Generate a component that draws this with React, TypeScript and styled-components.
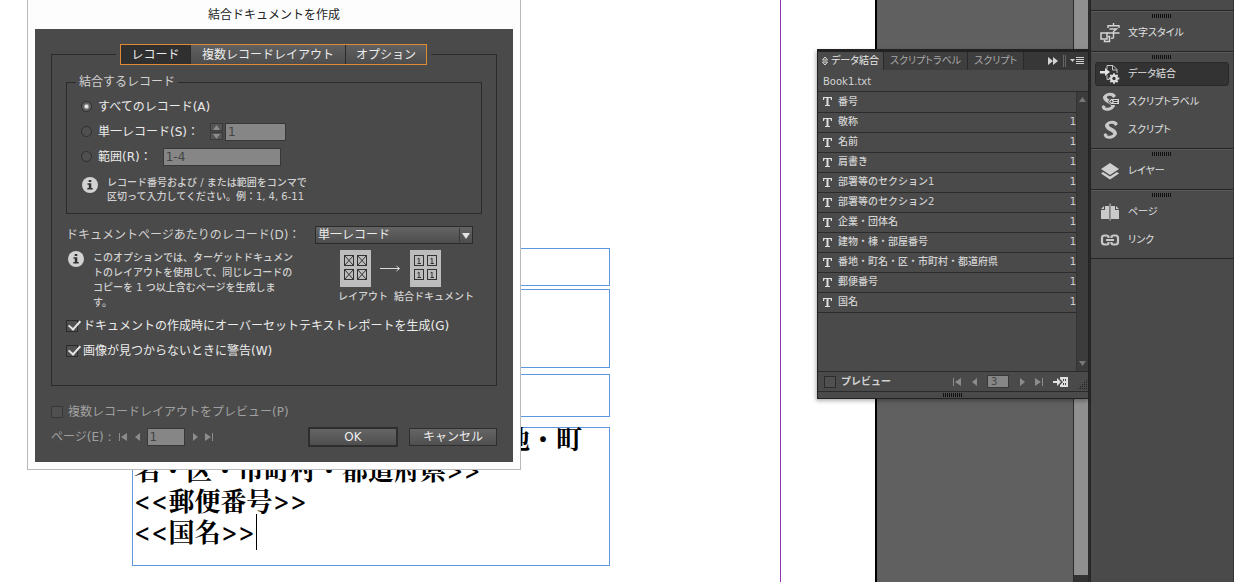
import React from "react";
import styled, { createGlobalStyle, css } from "styled-components";

const c = {
  face: "#4a4a4a",
  line: "#2b2b2b",
  field: "#868686",
  text: "#ececec",
  soft: "#d2d2d2",
  off: "#a0a0a0",
  frame: "#5f96e0",
};

const Global = createGlobalStyle`
  * { box-sizing: border-box; }
  body {
    margin: 0;
    background: #fff;
    color: ${c.text};
    font-family: "DejaVu Sans", "Noto Sans CJK JP", sans-serif;
    font-size: 12px;
    line-height: 20px;
  }
  button, input, select { font: inherit; font-feature-settings: inherit; color: inherit; margin: 0; }
  svg { display: block; flex: none; }
`;

const Workspace = styled.div`
  display: flex;
  min-height: 100vh;
`;

/* ---------- document ---------- */

const Canvas = styled.main`
  position: relative;
  display: flex;
  flex: 1;
  min-width: 0;
`;

const Sheet = styled.div`
  position: relative;
  flex: 1;
  background: #fff;
  border-right: 2px solid #000;
`;

const Guide = styled.div`
  position: absolute;
  left: 780px;
  top: 0;
  bottom: 0;
  width: 1px;
  background: #8e35b5;
`;

const Pasteboard = styled.div`
  width: 196px;
  background: #606060;
`;

const CanvasScroll = styled.div`
  display: flex;
  width: 17px;
  padding-bottom: 7px;
  background: #333;
  border-left: 1px solid #2b2b2b;
  border-right: 2px solid #2b2b2b;
`;

const CanvasThumb = styled.div`
  flex: 1;
  background: #8f8f8f;
`;

const Frame = styled.div<{ $top: number; $height: number }>`
  position: absolute;
  left: 132px;
  top: ${(p) => p.$top}px;
  width: 478px;
  height: ${(p) => p.$height}px;
  border: 1px solid ${c.frame};
`;

const Story = styled.p`
  margin: -6px 0 0;
  padding: 0 1px;
  color: #000;
  font-family: "Noto Serif CJK JP", "Noto Sans CJK JP", serif;
  font-size: 26px;
  font-weight: 700;
  line-height: 31px;
  white-space: nowrap;
`;

const StoryLine = styled.span<{ $end?: boolean }>`
  display: block;
  width: ${(p) => (p.$end ? "448px" : "auto")};
  height: 31px;
  text-align: ${(p) => (p.$end ? "right" : "left")};
`;

const Mark = styled.span`
  font-family: Inter, sans-serif;
  font-weight: 400;
`;

const Caret = styled.span`
  display: inline-block;
  width: 1px;
  height: 36px;
  margin: -10px 0 -8px 1px;
  vertical-align: baseline;
  background: #000;
`;

/* ---------- dialog ---------- */

const Dialog = styled.form`
  position: absolute;
  left: 27px;
  top: 0;
  width: 494px;
  padding: 0 7px 7px;
  background: #fdfdfd;
  border: 1px solid #b9b9b9;
  border-top: 0;
`;

const DialogTitle = styled.h1`
  margin: 0;
  height: 29px;
  color: #222;
  font-size: 12px;
  font-weight: 400;
  line-height: 30px;
  text-align: center;
`;

const DialogBody = styled.div`
  padding: 15px 16px 13px;
  background: ${c.face};
`;

const Group = styled.fieldset<{ $outer?: boolean }>`
  min-width: 0;
  margin: 0;
  border: 1px solid ${c.line};
  padding: 2px 9px 9px;
  ${(p) =>
    p.$outer &&
    css`
      padding: 7px 14px 22px;
    `}
`;

const Caption = styled.legend`
  margin: 0;
  padding: 0 3px;
  color: ${c.soft};
`;

const TabLegend = styled.legend`
  margin-left: 50px;
  padding: 0 4px;
`;

const TabStrip = styled.div`
  display: flex;
  height: 21px;
  border: 1px solid #e08a32;
`;

const Tab = styled.button<{ $on?: boolean; $w: number }>`
  width: ${(p) => p.$w}px;
  padding: 0;
  border: 0;
  border-left: ${(p) => (p.$on ? "0" : "1px solid #2b2b2b")};
  background: ${(p) => (p.$on ? "#303030" : "linear-gradient(#606060, #4d4d4d)")};
  line-height: 18px;
  white-space: nowrap;
`;

const Row = styled.div<{ $dim?: boolean }>`
  display: flex;
  align-items: center;
  height: 25px;
  white-space: nowrap;
  color: ${(p) => (p.$dim ? c.off : c.text)};
`;

const OptionLabel = styled.label`
  margin-right: 11px;
`;

const Radio = styled.input.attrs({ type: "radio" })`
  appearance: none;
  flex: none;
  width: 11px;
  height: 11px;
  margin: 0 6px 0 5px;
  border: 1px solid #2f2f2f;
  border-radius: 50%;
  background: #505050;
  &:checked {
    background: radial-gradient(circle, #f0f0f0 1px, #606060 3px);
  }
`;

const Check = styled.input.attrs({ type: "checkbox" })`
  appearance: none;
  position: relative;
  flex: none;
  width: 12px;
  height: 12px;
  margin: 0 5px 0 0;
  border: 1px solid #2b2b2b;
  background: #505050;
  &:disabled { border-color: #383838; }
  &:checked::before {
    content: "";
    position: absolute;
    left: 4px;
    top: -3px;
    width: 5px;
    height: 10px;
    border: solid #e6e6e6;
    border-width: 0 2px 2px 0;
    transform: rotate(42deg);
  }
`;

const Field = styled.input.attrs({ type: "text" })<{ $w: number }>`
  width: ${(p) => p.$w}px;
  height: 18px;
  padding: 0 2px;
  border: 1px solid #383838;
  border-radius: 0;
  background: ${c.field};
  color: #444;
  line-height: 16px;
`;

const Spinner = styled.span`
  display: grid;
  gap: 1px;
  margin-right: 2px;
`;

const SpinButton = styled.button`
  display: grid;
  place-items: center;
  width: 13px;
  height: 8px;
  padding: 0;
  border: 1px solid #3a3a3a;
  background: #555;
  color: #8d8d8d;
`;

const Hint = styled.div<{ $inner?: boolean }>`
  display: flex;
  align-items: flex-start;
  gap: 9px;
  padding: ${(p) => (p.$inner ? "7px 0 0 6px" : "3px 0 0 2px")};
  > svg { margin-top: 1px; }
`;

const HintText = styled.p<{ $tight?: boolean }>`
  margin: 0;
  color: ${c.soft};
  font-size: 10px;
  font-weight: 500;
  line-height: ${(p) => (p.$tight ? 14 : 15)}px;
  white-space: nowrap;
`;

const Spread = styled.div`
  display: flex;
  align-items: center;
  justify-content: space-between;
  height: 25px;
  margin-top: 8px;
  padding-right: 9px;
  color: ${c.soft};
  white-space: nowrap;
`;

const Picker = styled.span`
  display: grid;
  align-items: center;
  width: 158px;
  > * { grid-area: 1 / 1; }
  svg { justify-self: end; pointer-events: none; }
`;

const Select = styled.select`
  appearance: none;
  width: 100%;
  height: 18px;
  padding: 0 2px;
  border: 1px solid #2b2b2b;
  border-radius: 0;
  background: linear-gradient(#646464, #4d4d4d);
  color: ${c.text};
  line-height: 16px;
`;

const Preview = styled.div`
  margin-left: auto;
  padding-right: 8px;
  color: ${c.soft};
  font-size: 10px;
  font-weight: 500;
  line-height: 15px;
  white-space: nowrap;
`;

const Thumbs = styled.div`
  display: flex;
  gap: 9px;
  padding: 0 2px 2px;
`;

const ThumbNames = styled.div`
  display: flex;
  gap: 6px;
`;

const Checks = styled.div`
  padding-top: 3px;
`;

const Footer = styled.div`
  padding-top: 13px;
`;

const Steps = styled.span`
  display: flex;
  align-items: center;
  gap: 7px;
  flex: 1;
`;

const StepButton = styled.button`
  display: grid;
  place-items: center;
  padding: 0;
  border: 0;
  background: none;
  color: #8c8c8c;
`;

const PushButton = styled.button<{ $primary?: boolean }>`
  width: ${(p) => (p.$primary ? 90 : 88)}px;
  height: ${(p) => (p.$primary ? 20 : 18)}px;
  margin-left: ${(p) => (p.$primary ? 0 : 11)}px;
  padding: 0;
  border: ${(p) => (p.$primary ? 2 : 1)}px solid #2e2e2e;
  background: linear-gradient(#656565, #4f4f4f);
  color: ${c.text};
  line-height: 16px;
`;

/* ---------- data panel ---------- */

const Panel = styled.section`
  position: absolute;
  right: 1px;
  top: 49px;
  width: 272px;
  border: 1px solid #222;
  border-top-width: 3px;
  background: ${c.face};
  color: ${c.soft};
  font-size: 10px;
  box-shadow: -1px 2px 4px rgba(0, 0, 0, 0.3);
`;

const PanelTabs = styled.div`
  display: flex;
  height: 18px;
  background: #373737;
  font-feature-settings: "palt";
`;

const PanelTab = styled.button<{ $on?: boolean }>`
  display: flex;
  align-items: center;
  gap: 3px;
  height: 18px;
  padding: 0 ${(p) => (p.$on ? 4 : 6)}px;
  border: 0;
  border-right: 1px solid #292929;
  background: ${(p) => (p.$on ? c.face : "#3e3e3e")};
  color: ${(p) => (p.$on ? "#e8e8e8" : "#a8a8a8")};
  line-height: 16px;
  white-space: nowrap;
`;

const PanelTools = styled.div`
  display: flex;
  align-items: center;
  gap: 5px;
  margin-left: auto;
  padding-right: 3px;
`;

const Source = styled.div`
  height: 22px;
  padding: 0 5px;
  border-bottom: 1px solid ${c.line};
  line-height: 24px;
`;

const ListArea = styled.div`
  display: flex;
  height: 280px;
  border-bottom: 1px solid ${c.line};
`;

const ListBox = styled.div`
  flex: 1;
`;

const FieldTable = styled.table`
  width: 100%;
  border-collapse: collapse;
  font-weight: 500;
  td {
    height: 20px;
    padding: 0 0 0 3px;
    border-bottom: 1px solid ${c.line};
    line-height: 18px;
  }
  td:first-child { width: 17px; padding-left: 5px; }
  td:last-child { text-align: right; }
`;

const ListScroll = styled.div`
  display: flex;
  flex-direction: column;
  justify-content: space-between;
  align-items: center;
  width: 12px;
  padding: 5px 0;
  background: #3c3c3c;
  border-left: 1px solid #333;
  color: #777;
`;

const PanelFooter = styled.div`
  display: flex;
  align-items: center;
  height: 20px;
  padding-left: 6px;
  border-bottom: 1px solid ${c.line};
  font-weight: 700;
`;

const PanelSteps = styled.div`
  display: flex;
  align-items: center;
  gap: 10px;
  margin-left: auto;
`;

const PanelField = styled(Field)`
  height: 13px;
  padding: 0 3px;
  font-weight: 400;
  line-height: 11px;
`;

const Corner = styled.span`
  display: flex;
  align-items: flex-end;
  height: 16px;
`;

const GripBar = styled.div`
  display: grid;
  place-items: center;
  height: 6px;
`;

/* ---------- dock ---------- */

const Dock = styled.aside`
  width: 144px;
  padding-top: 10px;
  background: ${c.face};
  border-left: 1px solid #262626;
  border-right: 1px solid #333;
  font-size: 10px;
  font-feature-settings: "palt";
`;

const DockGroup = styled.div`
  padding: 3px 4px 6px;
  border-top: 1px solid #262626;
  box-shadow: inset 0 1px #595959;
  &:last-of-type { border-bottom: 1px solid #262626; }
`;

const DockItems = styled.div`
  display: grid;
  gap: 4px;
  padding-top: 3px;
`;

const DockItem = styled.button<{ $on?: boolean }>`
  display: flex;
  align-items: center;
  gap: 8px;
  width: 100%;
  height: 24px;
  padding: 0 4px;
  border: ${(p) => (p.$on ? "1px solid #292929" : "1px solid transparent")};
  border-radius: 3px;
  background: ${(p) => (p.$on ? "#333" : "transparent")};
  color: #e0e0e0;
  line-height: 16px;
`;

/* ---------- drawings ---------- */

const GripMark = styled.svg`
  margin: 0 auto;
`;

const Grip = () => (
  <GripMark width="20" height="4" viewBox="0 0 20 4" stroke="#111" shapeRendering="crispEdges">
    {Array.from({ length: 10 }, (_, i) => (
      <path key={i} d={`M${i * 2 + 0.5} 0v4`} />
    ))}
  </GripMark>
);

type Way = "first" | "prev" | "next" | "last";
const StepIcon = ({ way }: { way: Way }) => {
  const d = {
    first: "M0 0h1v8h-1zM8 0v8L2 4z",
    prev: "M6 0v8L1 4z",
    next: "M1 0v8L6 4z",
    last: "M0 0v8L6 4zM7 0h1v8h-1z",
  }[way];
  const w = way === "first" || way === "last" ? 8 : 6;
  return (
    <svg width={w} height="8" viewBox={`0 0 ${w} 8`} fill="currentColor">
      <path d={d} />
    </svg>
  );
};

const Arrow = ({ up }: { up?: boolean }) => (
  <svg width="7" height="5" viewBox="0 0 7 5" fill="currentColor">
    <path d={up ? "M3.5 0L7 5H0z" : "M0 0h7L3.5 5z"} />
  </svg>
);

const Info = () => (
  <svg width="16" height="16" viewBox="0 0 16 16">
    <circle cx="8" cy="8" r="8" fill="#d2d2d2" />
    <path fill="#333" d="M6.7 3h2.6v2H6.7zM5.500 6.300h3.800v4.600h1.400v1.500H5.300v-1.500h1.500V7.700H5.500z" />
  </svg>
);

const PageThumb = ({ merged }: { merged?: boolean }) => (
  <svg width="31" height="37" viewBox="0 0 31 37" fill="none" stroke="#333">
    <rect width="31" height="37" fill="#bdbdbd" stroke="none" />
    {[4.5, 17.5].map((x) =>
      [5.5, 19.5].map((y) => (
        <g key={`${x}-${y}`} transform={`translate(${x} ${y})`}>
          <rect width="9" height="10" />
          {merged ? <path d="M3 3.500L4.500 2.500v5.500M3 8h3.500" /> : <path d="M0 0l9 10M9 0L0 10" />}
        </g>
      ))
    )}
  </svg>
);

const LongArrow = () => (
  <svg width="21" height="37" viewBox="0 0 21 37" fill="none" stroke="#dcdcdc">
    <path d="M0 18.500h19.500M16.500 16l3 2.500-3 2.500" />
  </svg>
);

const Scroll = () => (
  <g fill="none" stroke="#c9c9c9" strokeLinecap="round">
    <path strokeWidth="4" d="M5 5.500C5 9.500 13 9.500 13 13.500" />
    <path strokeWidth="3" d="M5 5C6 2 11 1.500 14 3.500M13 14c-1 3-6 4-9 2.500" />
    <circle cx="13.500" cy="4" r="1.300" fill="#c9c9c9" />
    <circle cx="3.500" cy="15" r="1.300" fill="#c9c9c9" />
  </g>
);

const icons: Record<string, React.ReactNode> = {
  style: (
    <g fill="none" stroke="#d4d4d4">
      <path strokeWidth="1.4" d="M8 5V2.700h11V5M13.500 0v2.500M9.500 6h7l-3 2.500v6q0 1-2.500.600M6.500 10h13" />
      <rect x="1" y="10" width="6" height="6" strokeWidth="1.500" />
      <path strokeWidth="1.500" d="M8 13.500h1.500v5H4.500V17" />
    </g>
  ),
  merge: (
    <g>
      <path fill="none" stroke="#c4c4c4" d="M7 5V1.500h6L17 5.500V9M7 11v4.500h2M12.500 1.500V6H17" />
      <path fill="#e4e4e4" d="M0 7h5V4l5 4-5 4V9.500H0z" />
      <circle cx="14" cy="14.500" r="2.800" fill="none" stroke="#ddd" strokeWidth="2.200" />
      <path stroke="#ddd" strokeWidth="1.800" d="M14 9.200v2M14 17.800v2M8.700 14.500h2M17.300 14.500h2M10.300 10.800l1.400 1.400M16.300 16.800l1.400 1.400M17.700 10.800l-1.400 1.400M11.700 16.800l-1.400 1.400" />
    </g>
  ),
  label: (
    <g>
      <Scroll />
      <path fill="#d8d8d8" stroke="#444" d="M8.500 9.500l2.500-3h8.500v6H11z" />
      <path stroke="#333" d="M13.500 8.500h4M13.500 10.500h4" />
      <circle cx="11.500" cy="9.500" r="1" fill="#333" />
    </g>
  ),
  script: (
    <g transform="translate(2 0)">
      <Scroll />
    </g>
  ),
  layers: (
    <g fill="#d0d0d0">
      <path d="M10 2l9 6-9 6-9-6z" />
      <path d="M1 12.500l2-1.500 7 4.500 7-4.500 2 1.500-9 6z" />
    </g>
  ),
  pages: (
    <g fill="#cacaca">
      <path d="M5 4h4v13H1V8h4zM11 4h4v4h4v9h-8z" />
      <path d="M1 7l3-3v3zM16 4l3 3h-3zM9.600 1.500h1v17h-1z" />
    </g>
  ),
  link: (
    <g fill="none" stroke="#c8c8c8" strokeWidth="2.200">
      <path d="M8.500 8V6.500q-.500-1-2-1H4.500Q2 5.500 2 8v4q0 2.500 2.500 2.500h2q1.500 0 2-1V12M11.500 8V6.500q.500-1 2-1h2Q18 5.500 18 8v4q0 2.500-2.500 2.500h-2q-1.500 0-2-1V12" />
      <path strokeWidth="2" d="M6 10h8" />
    </g>
  ),
};

const DockIcon = ({ name }: { name: string }) => (
  <svg width="20" height="20" viewBox="0 0 20 20">
    {icons[name]}
  </svg>
);

const TypeIcon = () => (
  <svg width="9" height="9" viewBox="0 0 9 9" fill="#dedede">
    <path d="M0 0h9v3H8L7.500 1H5.500v7H7v1H2V8h1.500V1h-2L1 3H0z" />
  </svg>
);

const CreateIcon = () => (
  <svg width="15" height="12" viewBox="0 0 15 12">
    <path fill="#e0e0e0" d="M7 1h8v10H7V9l3-3-3-3z" />
    <path fill="#e0e0e0" d="M0 5h4V2l4 4-4 4V7H0z" />
    <path stroke="#444" strokeWidth="2" strokeDasharray="1 1" d="M10 4h4M10 8h4" />
  </svg>
);

const CornerDots = () => (
  <svg width="10" height="10" viewBox="0 0 10 10" stroke="#222" strokeDasharray="1 1">
    <path d="M8.500 0v10M6.500 2v8M4.500 4v6M2.500 6v4M.500 8v2" />
  </svg>
);

/* ---------- content ---------- */

const fields = [
  ["番号", ""],
  ["敬称", "1"],
  ["名前", "1"],
  ["肩書き", "1"],
  ["部署等のセクション1", "1"],
  ["部署等のセクション2", "1"],
  ["企業・団体名", "1"],
  ["建物・棟・部屋番号", "1"],
  ["番地・町名・区・市町村・都道府県", "1"],
  ["郵便番号", "1"],
  ["国名", "1"],
];

const dock = [
  [["style", "文字スタイル"]],
  [["merge", "データ結合"], ["label", "スクリプトラベル"], ["script", "スクリプト"]],
  [["layers", "レイヤー"]],
  [["pages", "ページ"], ["link", "リンク"]],
];

const MergeDialog = () => (
  <Dialog onSubmit={(e) => e.preventDefault()}>
    <DialogTitle>結合ドキュメントを作成</DialogTitle>
    <DialogBody>
      <Group $outer>
        <TabLegend>
          <TabStrip role="tablist">
            <Tab type="button" role="tab" aria-selected $on $w={69}>レコード</Tab>
            <Tab type="button" role="tab" $w={155}>複数レコードレイアウト</Tab>
            <Tab type="button" role="tab" $w={81}>オプション</Tab>
          </TabStrip>
        </TabLegend>
        <Group>
          <Caption>結合するレコード</Caption>
          <Row>
            <Radio id="all" name="rec" defaultChecked />
            <OptionLabel htmlFor="all">すべてのレコード(A)</OptionLabel>
          </Row>
          <Row>
            <Radio id="one" name="rec" />
            <OptionLabel htmlFor="one">単一レコード(S)：</OptionLabel>
            <Spinner>
              <SpinButton type="button" aria-label="増やす"><Arrow up /></SpinButton>
              <SpinButton type="button" aria-label="減らす"><Arrow /></SpinButton>
            </Spinner>
            <Field $w={61} aria-label="単一レコード" defaultValue="1" />
          </Row>
          <Row>
            <Radio id="range" name="rec" />
            <OptionLabel htmlFor="range">範囲(R)：</OptionLabel>
            <Field $w={118} aria-label="範囲" defaultValue="1-4" />
          </Row>
          <Hint $inner>
            <Info />
            <HintText $tight>
              レコード番号および / または範囲をコンマで
              <br />
              区切って入力してください。例：1, 4, 6-11
            </HintText>
          </Hint>
        </Group>
        <Spread>
          <label htmlFor="per">ドキュメントページあたりのレコード(D)：</label>
          <Picker>
            <Select id="per"><option>単一レコード</option></Select>
            <svg width="20" height="16" viewBox="0 0 20 16">
              <path stroke="#383838" d="M6.500 1v14" />
              <path fill="#e4e4e4" d="M9 6h8l-4 6z" />
            </svg>
          </Picker>
        </Spread>
        <Hint>
          <Info />
          <HintText>
            このオプションでは、ターゲットドキュメン
            <br />
            トのレイアウトを使用して、同じレコードの
            <br />
            コピーを 1 つ以上含むページを生成しま
            <br />
            す。
          </HintText>
          <Preview>
            <Thumbs>
              <PageThumb />
              <LongArrow />
              <PageThumb merged />
            </Thumbs>
            <ThumbNames>
              <span>レイアウト</span>
              <span>結合ドキュメント</span>
            </ThumbNames>
          </Preview>
        </Hint>
        <Checks>
          <Row>
            <Check id="over" defaultChecked />
            <label htmlFor="over">ドキュメントの作成時にオーバーセットテキストレポートを生成(G)</label>
          </Row>
          <Row>
            <Check id="warn" defaultChecked />
            <label htmlFor="warn">画像が見つからないときに警告(W)</label>
          </Row>
        </Checks>
      </Group>
      <Footer>
        <Row $dim>
          <Check id="multi" disabled />
          <label htmlFor="multi">複数レコードレイアウトをプレビュー(P)</label>
        </Row>
        <Row $dim>
          <Steps>
            <label htmlFor="page">ページ(E) :</label>
            <StepButton type="button" aria-label="最初"><StepIcon way="first" /></StepButton>
            <StepButton type="button" aria-label="前"><StepIcon way="prev" /></StepButton>
            <Field id="page" $w={38} defaultValue="1" />
            <StepButton type="button" aria-label="次"><StepIcon way="next" /></StepButton>
            <StepButton type="button" aria-label="最後"><StepIcon way="last" /></StepButton>
          </Steps>
          <PushButton type="submit" $primary>OK</PushButton>
          <PushButton type="button">キャンセル</PushButton>
        </Row>
      </Footer>
    </DialogBody>
  </Dialog>
);

const DataPanel = () => (
  <Panel>
    <PanelTabs role="tablist">
      <PanelTab role="tab" aria-selected $on>
        <svg width="6" height="10" viewBox="0 0 6 10" fill="none" stroke="#ddd">
          <path d="M.500 4L3 1l2.500 3zM.500 6L3 9l2.500-3z" />
        </svg>
        データ結合
      </PanelTab>
      <PanelTab role="tab">スクリプトラベル</PanelTab>
      <PanelTab role="tab">スクリプト</PanelTab>
      <PanelTools>
        <svg width="10" height="8" viewBox="0 0 10 8" fill="#d4d4d4">
          <path d="M0 0v8l5-4zM5 0v8l5-4z" />
        </svg>
        <svg width="22" height="12" viewBox="0 0 22 12">
          <path stroke="#666" d="M.500 0v12M2.500 0v12" />
          <path fill="#ccc" d="M7 4h5l-2.500 3z" />
          <path stroke="#ccc" d="M13 2.500h8M13 4.500h8M13 6.500h8M13 8.500h8" />
        </svg>
      </PanelTools>
    </PanelTabs>
    <Source>Book1.txt</Source>
    <ListArea>
      <ListBox>
        <FieldTable>
          <tbody>
            {fields.map(([name, count]) => (
              <tr key={name}>
                <td><TypeIcon /></td>
                <td>{name}</td>
                <td>{count}</td>
              </tr>
            ))}
          </tbody>
        </FieldTable>
      </ListBox>
      <ListScroll><Arrow up /><Arrow /></ListScroll>
    </ListArea>
    <PanelFooter>
      <Check id="prev" />
      <label htmlFor="prev">プレビュー</label>
      <PanelSteps>
        <StepButton aria-label="最初"><StepIcon way="first" /></StepButton>
        <StepButton aria-label="前"><StepIcon way="prev" /></StepButton>
        <PanelField $w={22} aria-label="レコード" defaultValue="3" />
        <StepButton aria-label="次"><StepIcon way="next" /></StepButton>
        <StepButton aria-label="最後"><StepIcon way="last" /></StepButton>
        <StepButton aria-label="結合ドキュメントを作成"><CreateIcon /></StepButton>
        <Corner><CornerDots /></Corner>
      </PanelSteps>
    </PanelFooter>
    <GripBar><Grip /></GripBar>
  </Panel>
);

export default function App() {
  return (
    <>
      <Global />
      <Workspace>
        <Canvas>
          <Sheet>
            <Guide />
            <Frame $top={248} $height={38} />
            <Frame $top={289} $height={79} />
            <Frame $top={374} $height={43} />
            <Frame $top={427} $height={139}>
              <Story>
                <StoryLine $end>番地・町</StoryLine>
                <StoryLine>名・区・市町村・都道府県<Mark>&gt;&gt;</Mark></StoryLine>
                <StoryLine><Mark>&lt;&lt;</Mark>郵便番号<Mark>&gt;&gt;</Mark></StoryLine>
                <StoryLine><Mark>&lt;&lt;</Mark>国名<Mark>&gt;&gt;</Mark><Caret /></StoryLine>
              </Story>
            </Frame>
          </Sheet>
          <Pasteboard />
          <CanvasScroll><CanvasThumb /></CanvasScroll>
          <MergeDialog />
          <DataPanel />
        </Canvas>
        <Dock>
          {dock.map((group, i) => (
            <DockGroup key={i}>
              <Grip />
              <DockItems>
                {group.map(([icon, name]) => (
                  <DockItem key={name} $on={icon === "merge"}>
                    <DockIcon name={icon} />
                    {name}
                  </DockItem>
                ))}
              </DockItems>
            </DockGroup>
          ))}
        </Dock>
      </Workspace>
    </>
  );
}
